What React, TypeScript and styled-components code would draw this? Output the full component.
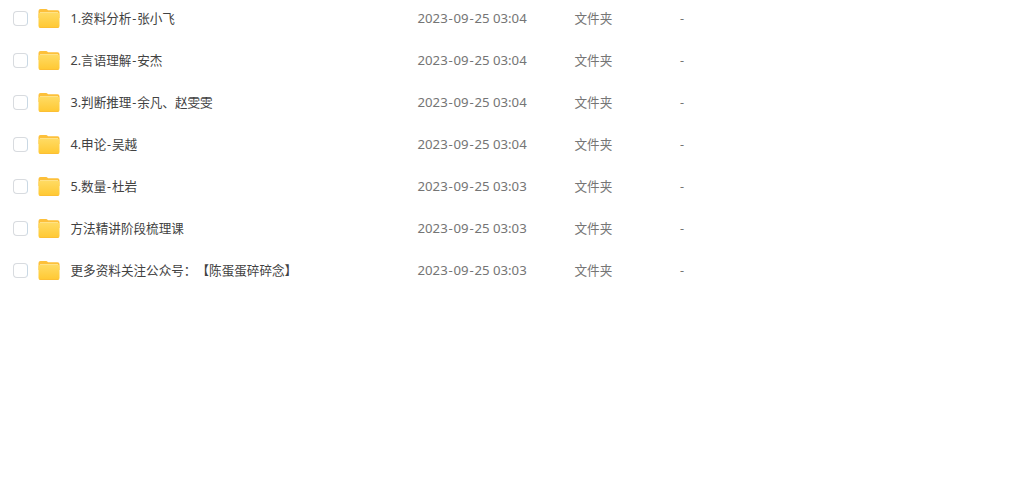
import React from 'react'
import styled, { createGlobalStyle } from 'styled-components'

interface iFile {
    name: string
    date: string
    type: string
    size: string
}

const files: iFile[] = [
    { name: '1.资料分析-张小飞', date: '2023-09-25 03:04', type: '文件夹', size: '-' },
    { name: '2.言语理解-安杰', date: '2023-09-25 03:04', type: '文件夹', size: '-' },
    { name: '3.判断推理-余凡、赵雯雯', date: '2023-09-25 03:04', type: '文件夹', size: '-' },
    { name: '4.申论-吴越', date: '2023-09-25 03:04', type: '文件夹', size: '-' },
    { name: '5.数量-杜岩', date: '2023-09-25 03:03', type: '文件夹', size: '-' },
    { name: '方法精讲阶段梳理课', date: '2023-09-25 03:03', type: '文件夹', size: '-' },
    { name: '更多资料关注公众号：【陈蛋蛋碎碎念】', date: '2023-09-25 03:03', type: '文件夹', size: '-' },
]

const GlobalStyle = createGlobalStyle`
  body {
    margin: 0;
    background: #fff;
    font-family: 'Noto Sans', 'Noto Sans CJK SC', sans-serif;
    text-spacing-trim: space-all;
  }
  `

const List = styled.div`
  display: grid;
  grid-auto-rows: 37px;
  row-gap: 5px;
  `

const Row = styled.div`
  display: grid;
  grid-template-columns: 38px 32.5px 347px 157px 105.5px 1fr;
  align-items: center;
  white-space: nowrap;
  `

const Checkbox = styled.input`
  appearance: none;
  box-sizing: border-box;
  width: 15px;
  height: 15px;
  margin: 0 0 0 13px;
  border: 1px solid #d8dbdf;
  border-right-color: #c9d8e4;
  border-radius: 4px;
  background: #fff;
  `

const Name = styled.div`
  color: #424242;
  font-size: 12.6px;
  line-height: 18px;
  `

const Cell = styled.div`
  color: #757575;
  font-size: 12.6px;
  line-height: 18px;
  `

const DateCell = styled(Cell)`
  padding-bottom: 1px;
  font-size: 13.2px;
  `

const Dash = styled.span`
  padding: 0 0.8px;
  `

const Folder = styled.svg`
  display: block;
  `

// hyphens get a little air on both sides
const withDashes = (text: string) =>
    text.split('-').map((part, i) => (
        <React.Fragment key={i}>
            {i > 0 ? <Dash>-</Dash> : null}
            {part}
        </React.Fragment>
    ))

const FolderIcon = () => (
    <Folder width="22" height="21" viewBox="0 0 22 21">
        <defs>
            <linearGradient id="folder" x1="0" y1="0" x2="0" y2="1">
                <stop offset="0" stopColor="#ffdb63" />
                <stop offset="1" stopColor="#ffc832" />
            </linearGradient>
        </defs>
        <path d="M.5 3Q.5 1 2.5 1H8Q9 1 10 2.2H19.5Q21.5 2.2 21.5 4.2V10H.5Z" fill="#fdc03a" />
        <path d="M2 4H20V8H2Z" fill="#ffe493" />
        <path d="M.5 6.5Q.5 4.7 2.3 4.7H19.7Q21.5 4.7 21.5 6.5V18Q21.5 20 19.5 20H2.5Q.5 20 .5 18Z" fill="url(#folder)" />
        <path d="M1.5 19.5H20.5" stroke="#fbbd35" strokeWidth=".8" />
    </Folder>
)

const App = () => (
    <>
        <GlobalStyle />
        <List>
            {files.map(file => (
                <Row key={file.name}>
                    <Checkbox type="checkbox" aria-label={file.name} />
                    <FolderIcon />
                    <Name>{withDashes(file.name)}</Name>
                    <DateCell>{withDashes(file.date)}</DateCell>
                    <Cell>{file.type}</Cell>
                    <Cell>{file.size}</Cell>
                </Row>
            ))}
        </List>
    </>
)

export default App
